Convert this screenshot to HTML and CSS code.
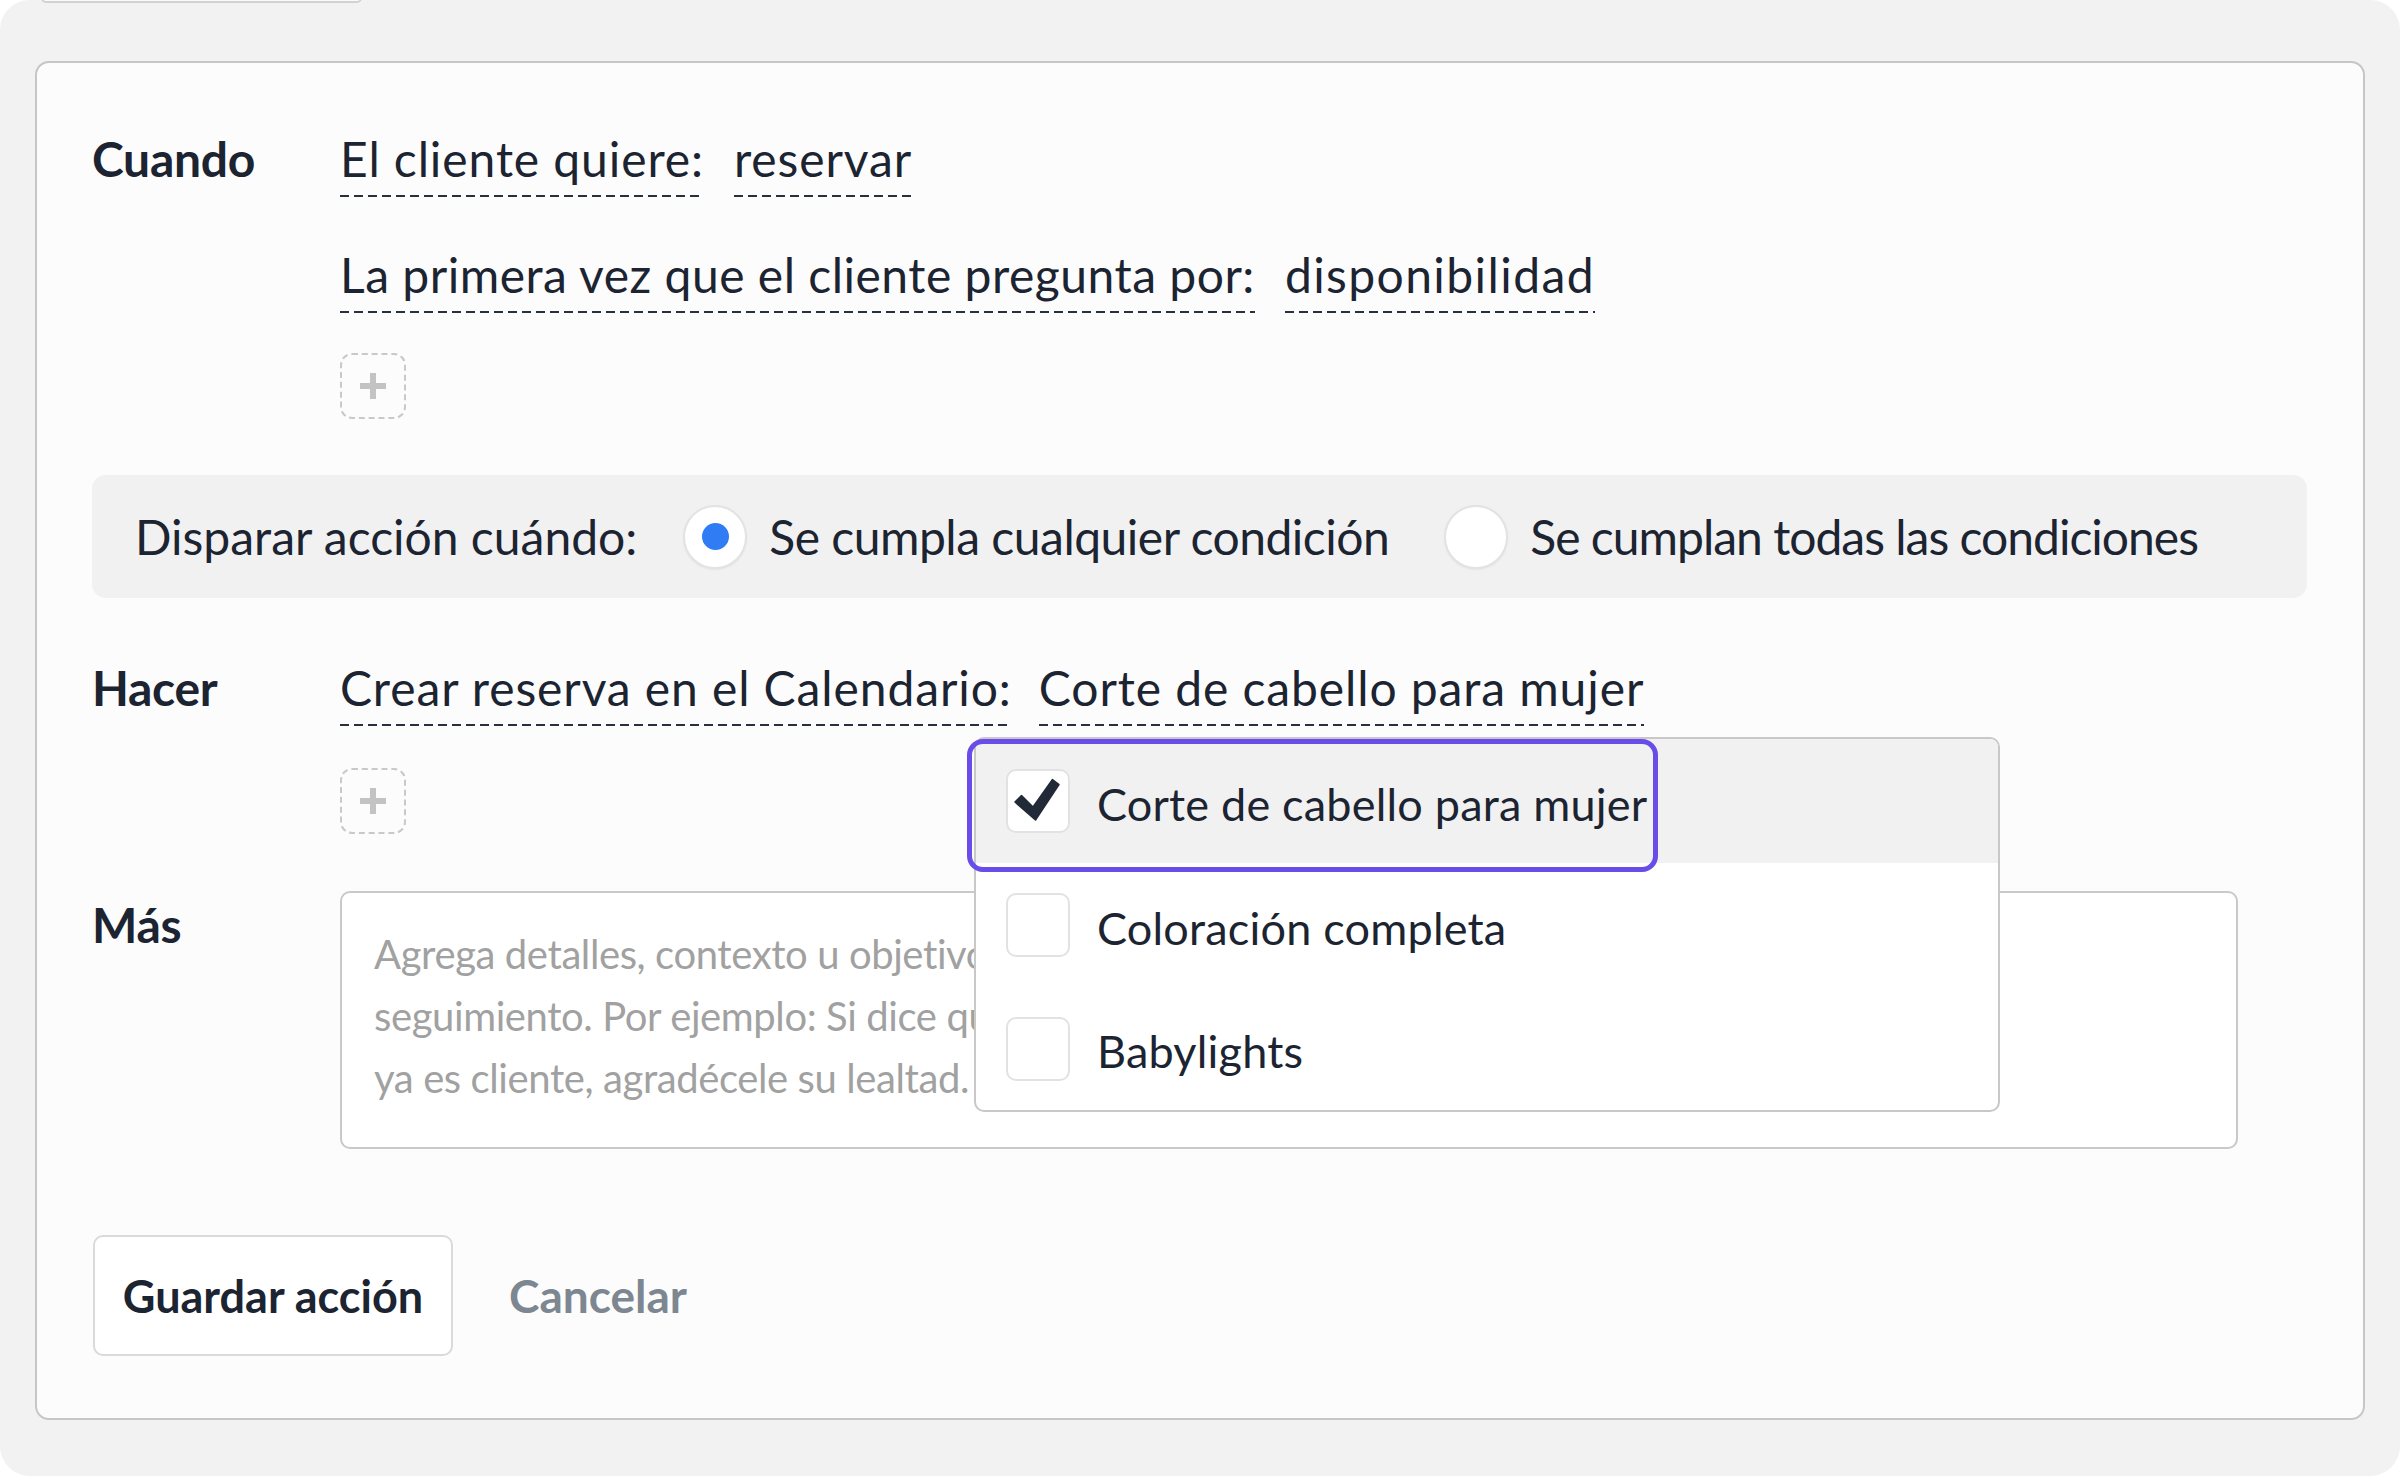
FILE: index.html
```html
<!DOCTYPE html>
<html lang="es">
<head>
<meta charset="utf-8">
<title>Acción</title>
<link rel="stylesheet" href="styles.css">
</head>
<body>
<div class="frame">
  <div class="stub"></div>
  <section class="card">
    <div class="row">
      <div class="label">Cuando</div>
      <div class="value">
        <div class="line"><span class="chip">El cliente quiere:</span><span class="chip">reservar</span></div>
        <div class="line line-2"><span class="chip chip-long">La primera vez que el cliente pregunta por:</span><span class="chip chip-wide">disponibilidad</span></div>
        <button class="add" type="button" aria-label="Agregar condición">
          <svg viewBox="0 0 30 30" width="30" height="30"><path d="M15 2v26M2 15h26" stroke="#c3c3c3" stroke-width="6"/></svg>
        </button>
      </div>
    </div>

    <div class="trigger">
      <span class="trigger-label">Disparar acción cuándo:</span>
      <label class="radio-opt"><span class="radio checked"></span><span class="radio-text">Se cumpla cualquier condición</span></label>
      <label class="radio-opt"><span class="radio"></span><span class="radio-text radio-text-2">Se cumplan todas las condiciones</span></label>
    </div>

    <div class="row row-do">
      <div class="label">Hacer</div>
      <div class="value value-do">
        <div class="line line-do"><span class="chip">Crear reserva en el Calendario:</span><span class="chip">Corte de cabello para mujer</span></div>
        <button class="add" type="button" aria-label="Agregar acción">
          <svg viewBox="0 0 30 30" width="30" height="30"><path d="M15 2v26M2 15h26" stroke="#c3c3c3" stroke-width="6"/></svg>
        </button>
        <div class="dropdown">
          <div class="focus-ring"></div>
          <div class="opt opt-active">
            <span class="box">
              <svg viewBox="0 0 64 64" width="64" height="64"><path d="M9 33 L15.5 26.5 L27 38 L46.5 10.5 L53 15.5 L29.5 51 Z" fill="#222a37" stroke="#222a37" stroke-width="1.5" stroke-linejoin="round"/></svg>
            </span>
            <span class="opt-text">Corte de cabello para mujer</span>
          </div>
          <div class="opt">
            <span class="box"></span>
            <span class="opt-text">Coloración completa</span>
          </div>
          <div class="opt">
            <span class="box"></span>
            <span class="opt-text">Babylights</span>
          </div>
        </div>
      </div>
    </div>

    <div class="row row-more">
      <div class="label label-more">Más</div>
      <textarea class="notes" placeholder="Agrega detalles, contexto u objetivos para la respuesta o el&#10;seguimiento. Por ejemplo: Si dice que es su primera vez, dale la bienvenida; si&#10;ya es cliente, agradécele su lealtad."></textarea>
    </div>

    <div class="actions">
      <button class="btn-save" type="button">Guardar acción</button>
      <button class="btn-cancel" type="button">Cancelar</button>
    </div>
  </section>
</div>
</body>
</html>
```

FILE: styles.css
```css
* { box-sizing: border-box; }

html, body {
  margin: 0;
  padding: 0;
  background: #ffffff;
}

body {
  width: 2400px;
  height: 1476px;
  overflow: hidden;
  font-family: "Lato", "Open Sans", sans-serif;
  color: #1c2432;
}

.frame {
  width: 2400px;
  height: 1476px;
  background: #f2f2f2;
  border-radius: 30px;
  padding: 0 35px;
  overflow: hidden;
}

.stub {
  width: 321px;
  height: 10px;
  margin: -7px 0 0 6px;
  border: 2px solid #d2d2d2;
  border-radius: 12px;
  background: #fafafa;
}

.card {
  margin-top: 58px;
  background: #fcfcfc;
  border: 2px solid #c6c6c6;
  border-radius: 14px;
  padding: 66px 56px 62px 55px;
}

.row {
  display: grid;
  grid-template-columns: 248px 1fr;
  align-items: start;
}

.label {
  font-weight: 700;
  font-size: 48px;
  line-height: 60px;
  color: #1c2432;
  letter-spacing: -0.3px;
}

.value {
  display: flex;
  flex-direction: column;
  align-items: flex-start;
}

.line {
  display: flex;
  gap: 30px;
  height: 68px;
}

.line-2 { margin-top: 48px; }

.line-do { gap: 27px; }

.chip {
  display: inline-block;
  font-size: 48px;
  line-height: 60px;
  letter-spacing: 0.9px;
  padding-bottom: 8px;
  white-space: nowrap;
  background-image: repeating-linear-gradient(90deg, #283040 0 9px, transparent 9px 14px);
  background-size: 100% 2px;
  background-position: left bottom;
  background-repeat: no-repeat;
}

.chip-long { letter-spacing: 0.5px; }

.chip-wide { letter-spacing: 1.4px; }

.add {
  margin-top: 40px;
  width: 66px;
  height: 66px;
  border: 2px dashed #c9c9c9;
  border-radius: 12px;
  background: transparent;
  display: flex;
  align-items: center;
  justify-content: center;
  padding: 0;
}

.trigger {
  margin-top: 56px;
  height: 123px;
  background: #f1f1f1;
  border-radius: 14px;
  display: flex;
  align-items: center;
  padding-left: 43px;
  font-size: 48px;
  line-height: 60px;
}

.trigger-label { margin-right: 46px; }

.radio-opt {
  display: flex;
  align-items: center;
  gap: 22px;
  margin-right: 55px;
}

.radio-text { letter-spacing: -0.5px; }

.radio-text-2 { letter-spacing: -1px; }

.radio {
  width: 64px;
  height: 64px;
  border-radius: 50%;
  background: #ffffff;
  border: 2px solid #e3e3e3;
  box-shadow: 0 1px 2px rgba(0, 0, 0, 0.06);
  display: flex;
  align-items: center;
  justify-content: center;
}

.radio.checked::after {
  content: "";
  width: 27px;
  height: 27px;
  border-radius: 50%;
  background: #2f7cf5;
}

.row-do { margin-top: 60px; }

.value-do { position: relative; }

.value-do .add { margin-top: 42px; }

.dropdown {
  position: absolute;
  left: 634px;
  top: 79px;
  width: 1026px;
  height: 375px;
  background: #ffffff;
  border: 2px solid #c8c8c8;
  border-radius: 10px;
  z-index: 5;
  display: flex;
  flex-direction: column;
}

.focus-ring {
  position: absolute;
  left: -9px;
  top: 0;
  width: 691px;
  height: 133px;
  border: 5px solid #6a4ce9;
  border-radius: 16px;
  z-index: 2;
  pointer-events: none;
}

.opt {
  height: 124px;
  display: flex;
  align-items: center;
  gap: 27px;
  padding-left: 30px;
}

.opt:last-child { height: 123px; }

.opt-active {
  background: #f1f1f1;
  border-radius: 8px 8px 0 0;
}

.box {
  width: 64px;
  height: 64px;
  border: 2px solid #e2e2e2;
  border-radius: 10px;
  background: #ffffff;
  display: flex;
  align-items: center;
  justify-content: center;
  flex: none;
}

.box svg { display: block; margin: -2px; }

.opt-text {
  font-size: 45px;
  line-height: 60px;
  padding-top: 5px;
  letter-spacing: 0.2px;
  white-space: nowrap;
}

.row-more { margin-top: 57px; }

.label-more { margin-top: 4px; }

.notes {
  display: block;
  width: 1898px;
  height: 258px;
  border: 2px solid #c9c9c9;
  border-radius: 10px;
  background: #ffffff;
  padding: 30px 32px;
  font-family: "Lato", "Open Sans", sans-serif;
  font-size: 40px;
  letter-spacing: -0.4px;
  line-height: 62px;
  color: #1c2432;
  resize: none;
  outline: none;
}

.notes::placeholder { color: #a1a1a1; }

.actions {
  margin-top: 86px;
  display: flex;
  align-items: center;
}

.btn-save {
  width: 360px;
  height: 121px;
  margin-left: 1px;
  border: 2px solid #dadada;
  border-radius: 10px;
  background: #ffffff;
  font-family: "Lato", "Open Sans", sans-serif;
  font-weight: 700;
  font-size: 45px;
  color: #1c2432;
  padding: 0;
}

.btn-cancel {
  margin-left: 56px;
  border: none;
  background: none;
  padding: 0;
  font-family: "Lato", "Open Sans", sans-serif;
  font-weight: 700;
  font-size: 46px;
  color: #7d8791;
}
```
